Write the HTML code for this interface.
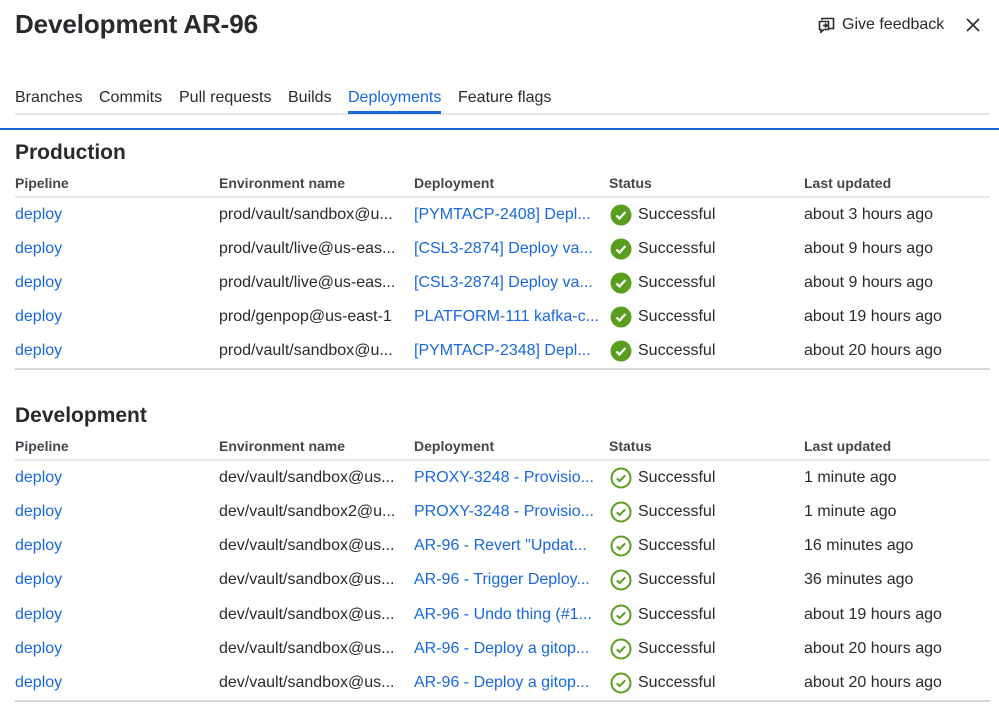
<!DOCTYPE html>
<html><head><style>
*{margin:0;padding:0;box-sizing:border-box}
body{width:999px;height:713px;overflow:hidden;background:#fff;font-family:"Liberation Sans",sans-serif;color:#292a2e;position:relative}
.title{position:absolute;left:15px;top:9px;font-size:26px;font-weight:bold;letter-spacing:-0.1px}
.fb{position:absolute;left:818px;top:16px;font-size:16px;display:flex;align-items:center;gap:7px}
.x{position:absolute;left:965px;top:17px}
.tabs{position:absolute;left:15px;top:88px;width:975px;height:27px;border-bottom:2px solid #e4e5e8;font-size:16px}
.tabs span{position:absolute;top:1px}
.act{color:#1868db}
.act:after{content:"";position:absolute;left:0;right:0;top:22px;height:3px;background:#1868db}
.blue{position:absolute;left:0;top:128px;width:999px;height:2px;background:#1868db}
h2{position:absolute;left:15px;font-size:21px;font-weight:bold}
table{position:absolute;left:15px;width:975px;border-collapse:collapse;font-size:16px;table-layout:fixed}
th{text-align:left;font-size:14px;font-weight:bold;color:#44464c;height:24px;border-bottom:2px solid #e4e5e8;vertical-align:top;padding-top:2px}
td{height:34.4px;white-space:nowrap;overflow:hidden;vertical-align:middle}
tr:last-child td{border-bottom:2px solid #d6d7da}
a{color:#1868db;text-decoration:none}
.st{display:flex;align-items:center;gap:6px;margin-left:1px}
.st svg{flex-shrink:0}
</style></head><body>
<div class="title">Development AR-96</div>
<div class="fb"><svg width="17" height="17" viewBox="0 0 17 17" fill="none" stroke="#292a2e" stroke-width="1.6"><path d="M4 3V1.5h11.5v10H10"/><path d="M1.5 4.5h9v8H6l-3 2.5v-2.5H1.5z"/><path d="M5 8.5h4M7 6.5l2 2-2 2"/></svg>Give feedback</div>
<svg class="x" width="16" height="16" viewBox="0 0 16 16" stroke="#292a2e" stroke-width="1.6"><path d="M2 2l12 12M14 2L2 14"/></svg>
<div class="tabs"><span style="left:0">Branches</span><span style="left:84px">Commits</span><span style="left:164px">Pull requests</span><span style="left:273px">Builds</span><span class="act" style="left:333px">Deployments</span><span style="left:443px">Feature flags</span></div>
<div class="blue"></div>
<h2 style="top:141px">Production</h2>
<table style="top:173px"><colgroup><col width="204"><col width="195"><col width="195"><col width="195"><col width="186"></colgroup>
<tr><th>Pipeline</th><th>Environment name</th><th>Deployment</th><th>Status</th><th>Last updated</th></tr>
<tr><td><a>deploy</a></td><td>prod/vault/sandbox@u...</td><td><a>[PYMTACP-2408] Depl...</a></td><td><div class="st"><svg width="22" height="22" viewBox="0 0 22 22"><circle cx="11" cy="11" r="10.5" fill="#5b9e1f"/><path d="M6.5 11.5l3 3 6-6.5" fill="none" stroke="#fff" stroke-width="2.2"/></svg>Successful</div></td><td>about 3 hours ago</td></tr>
<tr><td><a>deploy</a></td><td>prod/vault/live@us-eas...</td><td><a>[CSL3-2874] Deploy va...</a></td><td><div class="st"><svg width="22" height="22" viewBox="0 0 22 22"><circle cx="11" cy="11" r="10.5" fill="#5b9e1f"/><path d="M6.5 11.5l3 3 6-6.5" fill="none" stroke="#fff" stroke-width="2.2"/></svg>Successful</div></td><td>about 9 hours ago</td></tr>
<tr><td><a>deploy</a></td><td>prod/vault/live@us-eas...</td><td><a>[CSL3-2874] Deploy va...</a></td><td><div class="st"><svg width="22" height="22" viewBox="0 0 22 22"><circle cx="11" cy="11" r="10.5" fill="#5b9e1f"/><path d="M6.5 11.5l3 3 6-6.5" fill="none" stroke="#fff" stroke-width="2.2"/></svg>Successful</div></td><td>about 9 hours ago</td></tr>
<tr><td><a>deploy</a></td><td>prod/genpop@us-east-1</td><td><a>PLATFORM-111 kafka-c...</a></td><td><div class="st"><svg width="22" height="22" viewBox="0 0 22 22"><circle cx="11" cy="11" r="10.5" fill="#5b9e1f"/><path d="M6.5 11.5l3 3 6-6.5" fill="none" stroke="#fff" stroke-width="2.2"/></svg>Successful</div></td><td>about 19 hours ago</td></tr>
<tr><td><a>deploy</a></td><td>prod/vault/sandbox@u...</td><td><a>[PYMTACP-2348] Depl...</a></td><td><div class="st"><svg width="22" height="22" viewBox="0 0 22 22"><circle cx="11" cy="11" r="10.5" fill="#5b9e1f"/><path d="M6.5 11.5l3 3 6-6.5" fill="none" stroke="#fff" stroke-width="2.2"/></svg>Successful</div></td><td>about 20 hours ago</td></tr>
</table>
<h2 style="top:404px">Development</h2>
<table style="top:436px"><colgroup><col width="204"><col width="195"><col width="195"><col width="195"><col width="186"></colgroup>
<tr><th>Pipeline</th><th>Environment name</th><th>Deployment</th><th>Status</th><th>Last updated</th></tr>
<tr><td><a>deploy</a></td><td>dev/vault/sandbox@us...</td><td><a>PROXY-3248 - Provisio...</a></td><td><div class="st"><svg width="22" height="22" viewBox="0 0 22 22"><circle cx="11" cy="11" r="9.5" fill="none" stroke="#5b9e1f" stroke-width="2"/><path d="M6.8 11.3l2.8 2.8 5.6-5.8" fill="none" stroke="#5b9e1f" stroke-width="2"/></svg>Successful</div></td><td>1 minute ago</td></tr>
<tr><td><a>deploy</a></td><td>dev/vault/sandbox2@u...</td><td><a>PROXY-3248 - Provisio...</a></td><td><div class="st"><svg width="22" height="22" viewBox="0 0 22 22"><circle cx="11" cy="11" r="9.5" fill="none" stroke="#5b9e1f" stroke-width="2"/><path d="M6.8 11.3l2.8 2.8 5.6-5.8" fill="none" stroke="#5b9e1f" stroke-width="2"/></svg>Successful</div></td><td>1 minute ago</td></tr>
<tr><td><a>deploy</a></td><td>dev/vault/sandbox@us...</td><td><a>AR-96 - Revert "Updat...</a></td><td><div class="st"><svg width="22" height="22" viewBox="0 0 22 22"><circle cx="11" cy="11" r="9.5" fill="none" stroke="#5b9e1f" stroke-width="2"/><path d="M6.8 11.3l2.8 2.8 5.6-5.8" fill="none" stroke="#5b9e1f" stroke-width="2"/></svg>Successful</div></td><td>16 minutes ago</td></tr>
<tr><td><a>deploy</a></td><td>dev/vault/sandbox@us...</td><td><a>AR-96 - Trigger Deploy...</a></td><td><div class="st"><svg width="22" height="22" viewBox="0 0 22 22"><circle cx="11" cy="11" r="9.5" fill="none" stroke="#5b9e1f" stroke-width="2"/><path d="M6.8 11.3l2.8 2.8 5.6-5.8" fill="none" stroke="#5b9e1f" stroke-width="2"/></svg>Successful</div></td><td>36 minutes ago</td></tr>
<tr><td><a>deploy</a></td><td>dev/vault/sandbox@us...</td><td><a>AR-96 - Undo thing (#1...</a></td><td><div class="st"><svg width="22" height="22" viewBox="0 0 22 22"><circle cx="11" cy="11" r="9.5" fill="none" stroke="#5b9e1f" stroke-width="2"/><path d="M6.8 11.3l2.8 2.8 5.6-5.8" fill="none" stroke="#5b9e1f" stroke-width="2"/></svg>Successful</div></td><td>about 19 hours ago</td></tr>
<tr><td><a>deploy</a></td><td>dev/vault/sandbox@us...</td><td><a>AR-96 - Deploy a gitop...</a></td><td><div class="st"><svg width="22" height="22" viewBox="0 0 22 22"><circle cx="11" cy="11" r="9.5" fill="none" stroke="#5b9e1f" stroke-width="2"/><path d="M6.8 11.3l2.8 2.8 5.6-5.8" fill="none" stroke="#5b9e1f" stroke-width="2"/></svg>Successful</div></td><td>about 20 hours ago</td></tr>
<tr><td><a>deploy</a></td><td>dev/vault/sandbox@us...</td><td><a>AR-96 - Deploy a gitop...</a></td><td><div class="st"><svg width="22" height="22" viewBox="0 0 22 22"><circle cx="11" cy="11" r="9.5" fill="none" stroke="#5b9e1f" stroke-width="2"/><path d="M6.8 11.3l2.8 2.8 5.6-5.8" fill="none" stroke="#5b9e1f" stroke-width="2"/></svg>Successful</div></td><td>about 20 hours ago</td></tr>
</table>
</body></html>
